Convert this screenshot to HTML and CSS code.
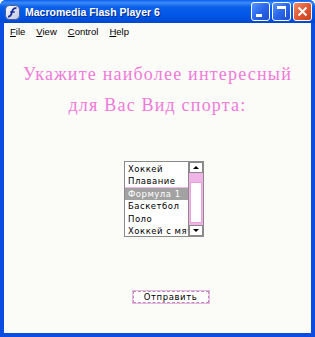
FILE: index.html
```html
<!DOCTYPE html>
<html>
<head>
<meta charset="utf-8">
<link rel="stylesheet" href="styles.css">
</head>
<body>
<div class="window">
  <div class="titlebar">
    <svg class="appicon" width="15" height="15" viewBox="0 0 15 15">
      <defs>
        <linearGradient id="ig" x1="0" y1="0" x2="1" y2="1">
          <stop offset="0" stop-color="#ffffff"/>
          <stop offset="1" stop-color="#b8c4e0"/>
        </linearGradient>
      </defs>
      <rect x="0.5" y="0.5" width="14" height="14" rx="4" fill="url(#ig)" stroke="#4a5a90"/>
      <path d="M11.5 3.2 C8.5 2.6 7.6 4.5 7 7 C6.4 9.6 5.6 11.8 3 11.6" fill="none" stroke="#1a2f9a" stroke-width="1.8"/>
      <path d="M5.2 7 L9.8 7" stroke="#1a2f9a" stroke-width="1.5"/>
    </svg>
    <span class="title">Macromedia Flash Player 6</span>
    <div class="tbuttons">
      <div class="tbtn"><span class="minbar"></span></div>
      <div class="tbtn"><span class="maxbox"></span></div>
      <div class="tbtn close">
        <svg width="11" height="11" viewBox="0 0 11 11"><path d="M1.5 1.5 L9.5 9.5 M9.5 1.5 L1.5 9.5" stroke="#fff" stroke-width="2"/></svg>
      </div>
    </div>
  </div>
  <div class="frame">
    <div class="menubar">
      <span><u>F</u>ile</span>
      <span><u>V</u>iew</span>
      <span><u>C</u>ontrol</span>
      <span><u>H</u>elp</span>
    </div>
    <div class="content">
      <div class="heading">
        <div>Укажите наиболее интересный</div>
        <div>для Вас Вид спорта:</div>
      </div>
      <div class="listbox">
        <div class="items">
          <div class="item">Хоккей</div>
          <div class="item">Плавание</div>
          <div class="item selected">Формула 1</div>
          <div class="item">Баскетбол</div>
          <div class="item">Поло</div>
          <div class="item">Хоккей с мячом</div>
        </div>
        <div class="scrollbar">
          <div class="arrow"><span class="up"></span></div>
          <div class="track">
            <div class="thumb"></div>
            <div class="trackinner"></div>
          </div>
          <div class="arrow"><span class="down"></span></div>
        </div>
      </div>
      <div class="sendbtn">Отправить</div>
    </div>
  </div>
</div>
</body>
</html>
```
FILE: styles.css
```css
html, body {
  margin: 0;
  padding: 0;
}
.window {
  width: 315px;
  height: 337px;
  background: #0a4de0;
  display: flex;
  flex-direction: column;
  box-sizing: border-box;
  border-radius: 6px 6px 0 0;
  overflow: hidden;
}
.titlebar {
  height: 23px;
  flex: none;
  display: flex;
  align-items: center;
  padding: 0 3px 0 3px;
  background: linear-gradient(#0a5ef0 0%, #3d8bf5 12%, #0a60ea 30%, #0055e5 70%, #0048d0 100%);
}
.appicon {
  flex: none;
  margin-left: 2px;
  margin-top: 1px;
}
.title {
  margin-left: 5px;
  color: #fff;
  font-family: "Liberation Sans", sans-serif;
  font-weight: bold;
  font-size: 10.5px;
  letter-spacing: 0;
  text-shadow: 1px 1px 0 #0a2a8a;
  flex: 1;
  white-space: nowrap;
}
.tbuttons {
  display: flex;
  gap: 2px;
  margin-right: 0;
}
.tbtn {
  width: 17px;
  height: 17px;
  border: 1px solid #fff;
  border-radius: 3px;
  background: linear-gradient(135deg, #5a95ff 0%, #2a66ea 50%, #1d4fd0 100%);
  display: flex;
  align-items: center;
  justify-content: center;
}
.tbtn.close {
  background: linear-gradient(135deg, #f08a6a 0%, #e05a34 50%, #c8401c 100%);
}
.minbar {
  width: 6px;
  height: 3px;
  background: #fff;
  margin-top: 8px;
  margin-right: 3px;
}
.maxbox {
  width: 8px;
  height: 8px;
  border: 1px solid #fff;
  border-top-width: 3px;
  border-left: none;
  border-bottom: none;
}
.frame {
  flex: 1;
  margin: 0 4px 4px 4px;
  background: #fbfbf8;
  display: flex;
  flex-direction: column;
}
.menubar {
  height: 17px;
  flex: none;
  display: flex;
  align-items: center;
  gap: 11px;
  padding-left: 6px;
  font-family: "Liberation Sans", sans-serif;
  font-size: 9.5px;
  color: #000;
}
.content {
  flex: 1;
  display: flex;
  flex-direction: column;
  align-items: center;
}
.heading {
  margin-top: 19px;
  font-family: "Liberation Serif", serif;
  font-size: 18px;
  color: #f07ad8;
  text-align: center;
  line-height: 31px;
  letter-spacing: 1.2px;
  white-space: nowrap;
}
.listbox {
  margin-top: 40px;
  margin-left: 13px;
  width: 78px;
  height: 74px;
  border: 1px solid #8a8a8a;
  background: #fff;
  display: flex;
}
.items {
  flex: 1;
  overflow: hidden;
  padding-top: 1px;
}
.item {
  height: 12.4px;
  line-height: 12.4px;
  padding-left: 3px;
  font-family: "DejaVu Sans", sans-serif;
  font-size: 8.5px;
  letter-spacing: 0.5px;
  white-space: nowrap;
  color: #000;
}
.item.selected {
  background: #a2a2a2;
  color: #fff;
  box-shadow: 0 -1px 0 #f0b8e8;
}
.scrollbar {
  width: 14px;
  flex: none;
  display: flex;
  flex-direction: column;
  border-left: 1px solid #8a8a8a;
}
.arrow {
  height: 11px;
  flex: none;
  background: #fff;
  border: 1px solid #8a8a8a;
  box-sizing: border-box;
  display: flex;
  align-items: center;
  justify-content: center;
}
.up {
  width: 0;
  height: 0;
  border-left: 3px solid transparent;
  border-right: 3px solid transparent;
  border-bottom: 3px solid #000;
}
.down {
  width: 0;
  height: 0;
  border-left: 3px solid transparent;
  border-right: 3px solid transparent;
  border-top: 3px solid #000;
}
.track {
  flex: 1;
  background: #f0b4e6;
  display: flex;
  flex-direction: column;
  padding: 1px 0;
}
.thumb {
  height: 8px;
  flex: none;
}
.trackinner {
  flex: 1;
  margin: 0 1px 1px 1px;
  background: #fff;
  border: 1px solid #e8a0dc;
}
.sendbtn {
  margin-top: 54px;
  margin-left: 26px;
  width: 74px;
  height: 10px;
  border: 1px dashed #a898a8;
  outline: 1px solid #f0b0e8;
  background: #fff;
  font-family: "DejaVu Sans", sans-serif;
  font-size: 8.5px;
  letter-spacing: 0.6px;
  line-height: 10px;
  text-align: center;
  color: #000;
}
```
